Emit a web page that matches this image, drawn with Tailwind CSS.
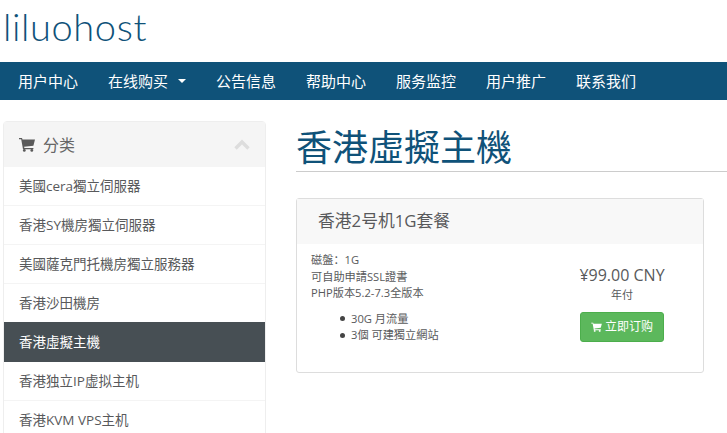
<!DOCTYPE html>
<html lang="zh">
<head>
<meta charset="utf-8">
<script src="https://cdn.jsdelivr.net/npm/@tailwindcss/browser@4"></script>
</head>
<body class="bg-white h-[433px] w-[727px] overflow-hidden font-['Open_Sans','Noto_Sans_CJK_TC',sans-serif] text-[#58595b]">
<header class="h-[62px] pl-[3px] flex items-start">
  <div class="font-['Lato',sans-serif] font-light text-[38px] leading-[52px] text-[#0f5279] tracking-[0.6px]">liluohost</div>
</header>
<nav class="h-[38px] bg-[#0f5279] flex items-center pl-[3px] text-white text-[15px]">
  <a class="px-[15px]">用户中心</a>
  <a class="px-[15px] flex items-center">在线购买<span class="ml-[10px] w-0 h-0 border-x-4 border-x-transparent border-t-4 border-t-white"></span></a>
  <a class="px-[15px]">公告信息</a>
  <a class="px-[15px]">帮助中心</a>
  <a class="px-[15px]">服务监控</a>
  <a class="px-[15px]">用户推广</a>
  <a class="px-[15px]">联系我们</a>
</nav>
<div class="flex items-start pl-[3px]">
  <aside class="mt-[21px] w-[263px] shrink-0 border border-[#eeeeee] rounded-t text-[13.5px] text-[#58595b]">
    <div class="h-[45px] bg-[#f5f5f5] flex items-center pl-[15px] pr-[15px] text-[16px] text-[#666]">
      <svg class="w-[16px] h-[15px] mr-[8px]" viewBox="0 0 16 15" fill="#5a5a5a"><path d="M0 1h3l.5 1.5H16l-1.6 6.2-9.3 1 .3 1.3h9v1.3H4L2.2 2.3H0z"/><circle cx="5.3" cy="13.4" r="1.4"/><circle cx="12.8" cy="13.4" r="1.4"/></svg>
      <span>分类</span>
      <svg class="ml-auto w-[16px] h-[11px]" viewBox="0 0 16 11" fill="none" stroke="#dddddd" stroke-width="3.4"><path d="M1.5 9.5 8 3l6.5 6.5"/></svg>
    </div>
    <a class="flex items-center h-[39px] px-[15px] border-b border-[#f4f4f4]">美國cera獨立伺服器</a>
    <a class="flex items-center h-[39px] px-[15px] border-b border-[#f4f4f4]">香港SY機房獨立伺服器</a>
    <a class="flex items-center h-[39px] px-[15px] border-b border-[#f4f4f4]">美國薩克門托機房獨立服務器</a>
    <a class="flex items-center h-[38px] px-[15px]">香港沙田機房</a>
    <a class="flex items-center h-[40px] px-[15px] bg-[#474f54] text-white">香港虛擬主機</a>
    <a class="flex items-center h-[39px] px-[15px] border-b border-[#f4f4f4]">香港独立IP虚拟主机</a>
    <a class="flex items-center h-[39px] px-[15px]">香港KVM VPS主机</a>
  </aside>
  <main class="ml-[30px] flex-1 min-w-0">
    <h1 class="mt-[23px] h-[49px] border-b border-[#cccccc] text-[36px] leading-[50px] text-[#0f5279] font-normal">香港虛擬主機</h1>
    <section class="mt-[26px] w-[408px] h-[175px] border border-[#dddddd] rounded-[3px] text-[11.2px] leading-[16.5px] text-[#58595b]">
      <div class="h-[45px] bg-[#f8f8f8] flex items-center pl-[21px] text-[16.8px] text-[#58595b]">香港2号机1G套餐</div>
      <div class="flex pt-[8px] pl-[14px]">
        <div class="w-[242px] shrink-0">
          <p>磁盤：1G</p>
          <p>可自助申請SSL證書</p>
          <p>PHP版本5.2-7.3全版本</p>
          <ul class="mt-[9px] pl-[29px]">
            <li class="flex items-center"><span class="w-[5px] h-[5px] rounded-full bg-[#444] mr-[6px]"></span>30G 月流量</li>
            <li class="flex items-center"><span class="w-[5px] h-[5px] rounded-full bg-[#444] mr-[6px]"></span>3個 可建獨立網站</li>
          </ul>
        </div>
        <div class="w-[130px] ml-[4px] flex flex-col items-center pt-[12px]">
          <div class="text-[16px] leading-[22px]">¥99.00 CNY</div>
          <div class="mt-[1px] text-[11px] leading-[16px]">年付</div>
          <a class="mt-[9px] w-[84px] h-[30px] rounded-[3px] bg-[#5cb85c] border border-[#4cae4c] text-white text-[12px] flex items-center justify-center">
            <svg class="w-[11px] h-[10px] mr-[3px]" viewBox="0 0 16 15" fill="#fff"><path d="M0 1h3l.5 1.5H16l-1.6 6.2-9.3 1 .3 1.3h9v1.3H4L2.2 2.3H0z"/><circle cx="5.3" cy="13.4" r="1.4"/><circle cx="12.8" cy="13.4" r="1.4"/></svg>立即订购</a>
        </div>
      </div>
    </section>
  </main>
</div>
</body>
</html>
